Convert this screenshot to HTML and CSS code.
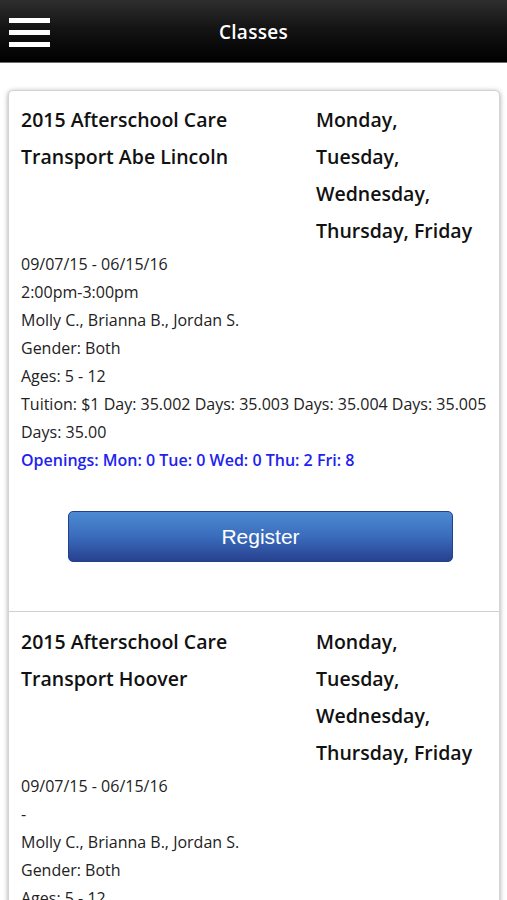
FILE: index.html
```html
<!DOCTYPE html>
<html>
  <head>
    <title>Classes</title>
    <meta name="viewport" content="width=device-width, initial-scale=1">
    <link rel="stylesheet" href="styles.css">
  </head>
  <body>
    <header class="topbar">
      <button class="menu-btn" aria-label="Menu">
        <span></span><span></span><span></span>
      </button>
      <h1>Classes</h1>
    </header>

    <div class="class-list">
      <div class="class-item">
        <div class="class-head">
          <div class="class-name">2015 Afterschool Care<br>Transport Abe Lincoln</div>
          <div class="class-days">Monday,<br>Tuesday,<br>Wednesday,<br>Thursday, Friday</div>
        </div>
        <div class="class-info">
          <p>09/07/15 - 06/15/16</p>
          <p>2:00pm-3:00pm</p>
          <p>Molly C., Brianna B., Jordan S.</p>
          <p>Gender: Both</p>
          <p>Ages: 5 - 12</p>
          <p>Tuition: $1 Day: 35.002 Days: 35.003 Days: 35.004 Days: 35.005 Days: 35.00</p>
          <p class="openings">Openings: Mon: 0 Tue: 0 Wed: 0 Thu: 2 Fri: 8</p>
        </div>
        <button class="register-btn">Register</button>
      </div>

      <div class="class-item">
        <div class="class-head">
          <div class="class-name">2015 Afterschool Care<br>Transport Hoover</div>
          <div class="class-days">Monday,<br>Tuesday,<br>Wednesday,<br>Thursday, Friday</div>
        </div>
        <div class="class-info">
          <p>09/07/15 - 06/15/16</p>
          <p>-</p>
          <p>Molly C., Brianna B., Jordan S.</p>
          <p>Gender: Both</p>
          <p>Ages: 5 - 12</p>
          <p>Tuition: $1 Day: 35.002 Days: 35.003 Days: 35.004 Days: 35.005 Days: 35.00</p>
          <p class="openings">Openings: Mon: 0 Tue: 0 Wed: 0 Thu: 2 Fri: 8</p>
        </div>
        <button class="register-btn">Register</button>
      </div>
    </div>
  </body>
</html>
```

FILE: styles.css
```css
body {
  margin: 0;
  background-color: #fff;
  font-family: "Open Sans", "Noto Sans", sans-serif;
  color: #1a1a1a;
}

.topbar {
  height: 62px;
  display: flex;
  align-items: center;
  justify-content: center;
  position: relative;
  background: linear-gradient(#2e2e2e, #141414 45%, #000);
  border-bottom: 1px solid #6b6b6b;
}

.topbar h1 {
  margin: 2px 0 0;
  color: #fff;
  font-size: 19px;
  font-weight: 600;
  letter-spacing: 0.3px;
}

.menu-btn {
  position: absolute;
  left: 9px;
  top: 18px;
  width: 41px;
  padding: 0;
  border: none;
  background: none;
  display: flex;
  flex-direction: column;
  gap: 7px;
}

.menu-btn span {
  display: block;
  height: 5px;
  background-color: #fff;
}

.class-list {
  margin: 27px 7px 0 8px;
  border: 1px solid #d4d4d4;
  border-radius: 5px;
  box-shadow: 0 1px 5px rgba(0, 0, 0, 0.35);
  background-color: #fff;
}

.class-item {
  padding: 10px 12px 49px 12px;
  border-bottom: 1px solid #d0d0d0;
}

.class-item + .class-item {
  padding-top: 11px;
}

.class-item:last-child {
  border-bottom: none;
}

.class-head {
  display: grid;
  grid-template-columns: 295px 1fr;
  font-size: 19.5px;
  font-weight: 600;
  line-height: 37px;
  color: #111;
}

.class-info {
  padding-top: 1px;
}

.class-info p {
  margin: 0;
  font-size: 16px;
  line-height: 28px;
  color: #222;
}

.class-info .openings {
  color: #2222ee;
  font-weight: 600;
}

.register-btn {
  display: block;
  width: 385px;
  height: 51px;
  margin: 37px 0 0 47px;
  border: 1px solid #23408a;
  border-radius: 5px;
  background: linear-gradient(#4d8ad2, #3a6cbc 50%, #27418f);
  color: #fff;
  font-family: "Liberation Sans", Arial, sans-serif;
  font-size: 21px;
}
```
